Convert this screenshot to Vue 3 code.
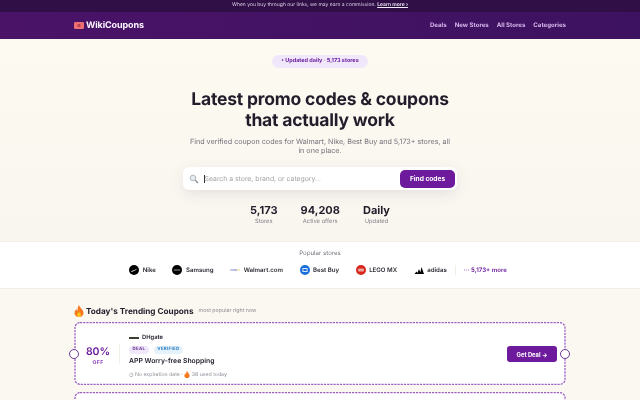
<script setup>
const stats = [
  { value: '5,173', label: 'Stores' },
  { value: '94,208', label: 'Active offers' },
  { value: 'Daily', label: 'Updated' },
]
const stores = [
  { name: 'Nike', type: 'nike' },
  { name: 'Samsung', type: 'samsung' },
  { name: 'Walmart.com', type: 'walmart' },
  { name: 'Best Buy', type: 'bestbuy' },
  { name: 'LEGO MX', type: 'lego' },
  { name: 'adidas', type: 'adidas' },
]
</script>

<template>
  <div class="page">
    <div class="notice">
      When you buy through our links, we may earn a commission. <a class="notice-link">Learn more ›</a>
    </div>
    <header class="nav">
      <div class="brand">
        <svg class="brand-icon" width="10" height="7" viewBox="0 0 10 7">
          <rect width="10" height="7" rx="1.2" fill="#ee6f73" />
          <rect x="3.6" y="2" width="2.8" height="3" fill="#b8434f" />
        </svg>
        <span>WikiCoupons</span>
      </div>
      <nav class="nav-links">
        <a>Deals</a>
        <a>New Stores</a>
        <a>All Stores</a>
        <a>Categories</a>
      </nav>
    </header>

    <section class="hero">
      <div class="pill">• Updated daily · 5,173 stores</div>
      <h1>Latest promo codes &amp; coupons<br>that actually work</h1>
      <p class="sub">Find verified coupon codes for Walmart, Nike, Best Buy and 5,173+ stores, all in one place.</p>
      <div class="search">
        <svg class="search-icon" width="10" height="10" viewBox="0 0 10 10">
          <circle cx="4" cy="4" r="2.8" fill="#e6ebf0" stroke="#aab2b9" stroke-width="0.900" />
          <path d="M6.2 6.2 9 9" stroke="#8a9096" stroke-width="1.300" />
        </svg>
        <span class="caret"></span>
        <span class="placeholder">Search a store, brand, or category...</span>
        <button class="find">Find codes</button>
      </div>
      <div class="stats">
        <div v-for="s in stats" :key="s.label" class="stat">
          <strong>{{ s.value }}</strong>
          <span>{{ s.label }}</span>
        </div>
      </div>
    </section>

    <section class="popular">
      <div class="popular-title">Popular stores</div>
      <div class="store-row">
        <div v-for="st in stores" :key="st.name" class="store">
          <svg width="10" height="10" viewBox="0 0 10 10">
            <template v-if="st.type === 'nike'">
              <circle cx="5" cy="5" r="5" fill="#000" />
              <path d="M2 6.2C3.5 6 6 5 8.2 3.8 6.500 5.500 3.500 7 2.600 6.800Z" fill="#fff" />
            </template>
            <template v-else-if="st.type === 'samsung'">
              <circle cx="5" cy="5" r="5" fill="#000" />
              <rect x="1.800" y="4.600" width="6.400" height="0.800" fill="#bbb" />
            </template>
            <template v-else-if="st.type === 'walmart'">
              <rect x="0" y="4.500" width="3" height="1" fill="#8c9be0" />
              <rect x="3" y="4.500" width="4" height="1" fill="#6a7bd0" />
              <rect x="7" y="4.500" width="3" height="1" fill="#e8d68a" />
            </template>
            <template v-else-if="st.type === 'bestbuy'">
              <circle cx="5" cy="5" r="5" fill="#1a6fdc" />
              <rect x="2.400" y="3" width="5.200" height="4" rx="0.600" fill="#d8e6f8" />
              <rect x="3.400" y="4" width="3.200" height="2" fill="#1a6fdc" />
            </template>
            <template v-else-if="st.type === 'lego'">
              <circle cx="5" cy="5" r="5" fill="#d9251c" />
              <rect x="2" y="3.500" width="6" height="3" rx="1" fill="#e8a8a0" />
            </template>
            <template v-else>
              <path d="M0.500 9 2.500 6.500 4 9ZM3 9 5 4 7 9ZM6 9 7.500 2 10 9Z" fill="#000" />
            </template>
          </svg>
          <span>{{ st.name }}</span>
        </div>
        <span class="divider"></span>
        <div class="more">··· 5,173+ more</div>
      </div>
    </section>

    <section class="trending">
      <div class="trend-head">
        <svg class="flame" width="10" height="12" viewBox="0 0 10 12">
          <path d="M5 0C5.500 2.500 9.500 4.500 9.500 8 9.500 10.500 7.500 12 5 12 2.500 12 .5 10.500 .5 8 .5 6 1.700 4.800 2.500 4 2.700 5 3 5.500 3.600 5.700 3.400 3.500 4 1.500 5 0Z" fill="#f4791f" />
          <path d="M5 6.500C5.500 7.800 7 8.500 7 10 7 11.200 6 12 5 12 4 12 3 11.200 3 10 3 8.800 4.500 8 5 6.500Z" fill="#fcc419" />
        </svg>
        <h2>Today's Trending Coupons</h2>
        <span class="trend-sub">most popular right now</span>
      </div>

      <article class="coupon">
        <svg class="dash" width="492" height="63" viewBox="0 0 492 63">
          <rect x="1" y="0.700" width="490" height="61.600" rx="5" fill="none" stroke="#9a5fc0" stroke-width="1.300" stroke-dasharray="2.200 1" />
        </svg>
        <span class="notch notch-left"></span>
        <span class="notch notch-right"></span>
        <div class="discount">
          <strong>80%</strong>
          <span>OFF</span>
        </div>
        <div class="info">
          <div class="merchant">
            <span class="merchant-logo"></span>
            <span>DHgate</span>
          </div>
          <div class="tags">
            <span class="tag tag-deal">DEAL</span>
            <span class="tag tag-verified">VERIFIED</span>
          </div>
          <div class="title">APP Worry-free Shopping</div>
          <div class="meta">
            <span>◷ No expiration date ·</span>
            <svg width="6" height="7" viewBox="0 0 10 12">
              <path d="M5 0C5.500 2.500 9.500 4.500 9.500 8 9.500 10.500 7.500 12 5 12 2.500 12 .5 10.500 .5 8 .5 6 1.700 4.800 2.500 4 2.700 5 3 5.500 3.600 5.700 3.400 3.500 4 1.500 5 0Z" fill="#f4791f" />
            </svg>
            <span>38 used today</span>
          </div>
        </div>
        <button class="deal">Get Deal →</button>
      </article>
      <article class="coupon coupon-next">
        <svg class="dash" width="492" height="63" viewBox="0 0 492 63">
          <rect x="1" y="0.700" width="490" height="61.600" rx="5" fill="none" stroke="#9a5fc0" stroke-width="1.300" stroke-dasharray="2.200 1" />
        </svg>
      </article>
    </section>
  </div>
</template>

<style scoped>
.page {
  width: 640px;
  height: 400px;
  overflow: hidden;
  font-family: Inter, "Liberation Sans", sans-serif;
  text-rendering: geometricPrecision;
  -webkit-font-smoothing: antialiased;
  will-change: transform;
  background: #fbf8f1;
  color: #231c2b;
}

.notice {
  height: 12px;
  line-height: 11px;
  background: #2f0f45;
  color: #dccfe6;
  font-size: 5px;
  text-align: center;
}

.notice-link {
  color: #f4ecfa;
  font-weight: 600;
  text-decoration: underline;
}

.nav {
  height: 27px;
  box-sizing: border-box;
  padding: 0 74px;
  display: flex;
  align-items: center;
  justify-content: space-between;
  background: linear-gradient(90deg, #4a1368, #3d1260);
}

.brand {
  display: flex;
  align-items: center;
  gap: 2px;
  color: #fbf6ff;
  font-size: 9px;
  font-weight: 700;
  letter-spacing: -0.1px;
}

.nav-links {
  display: flex;
  gap: 8px;
  color: #d4b6ea;
  font-size: 6.100px;
  font-weight: 700;
}

.hero {
  height: 202px;
  box-sizing: border-box;
  padding-top: 16px;
  display: flex;
  flex-direction: column;
  align-items: center;
  background: linear-gradient(180deg, #fdfaf1, #f9f6f0);
}

.pill {
  height: 13px;
  line-height: 13px;
  padding: 0 9px;
  border-radius: 7px;
  background: #f0e7fa;
  color: #6b1fa0;
  font-size: 5.500px;
  font-weight: 700;
}

h1 {
  margin: 22px 0 0;
  font-size: 17.500px;
  line-height: 20.500px;
  font-weight: 700;
  letter-spacing: -0.2px;
  text-align: center;
  color: #231c2b;
}

.sub {
  width: 265px;
  margin: 6px 0 0;
  font-size: 7.180px;
  line-height: 9.300px;
  text-align: center;
  color: #77717c;
}

.search {
  width: 274px;
  height: 23px;
  margin-top: 11.500px;
  box-sizing: border-box;
  padding: 0 2px 0 6px;
  display: flex;
  align-items: center;
  background: #fff;
  border-radius: 6px;
  box-shadow: 0 4px 14px rgba(60, 30, 80, 0.1);
}

.search-icon {
  flex: none;
}

.caret {
  width: 0.600px;
  height: 8px;
  margin-left: 5px;
  background: #333;
}

.placeholder {
  flex: 1;
  font-size: 6.850px;
  color: #a3a0a6;
}

.find {
  width: 55px;
  height: 18px;
  padding: 0;
  border: 0;
  border-radius: 5px;
  background: #6d1b9c;
  color: #fff;
  font-family: inherit;
  font-size: 6.600px;
  font-weight: 700;
}

.stats {
  display: flex;
  gap: 23px;
  margin-top: 13px;
}

.stat {
  display: flex;
  flex-direction: column;
  align-items: center;
}

.stat strong {
  font-size: 11px;
  line-height: 14px;
  font-weight: 700;
}

.stat span {
  margin-top: 1px;
  font-size: 5.800px;
  line-height: 8px;
  color: #85808a;
}

.popular {
  height: 48px;
  box-sizing: border-box;
  padding-top: 8px;
  background: #fff;
  border-top: 1px solid #f1eee8;
  border-bottom: 1px solid #f1eee8;
}

.popular-title {
  font-size: 6.100px;
  line-height: 8px;
  text-align: center;
  color: #77717c;
}

.store-row {
  margin-top: 7px;
  padding-right: 4px;
  display: flex;
  align-items: center;
  justify-content: center;
  gap: 16.600px;
}

.store {
  display: flex;
  align-items: center;
  gap: 3.500px;
  font-size: 6.100px;
  font-weight: 600;
  color: #2f2a33;
}

.divider {
  width: 1px;
  height: 10px;
  margin: 0 -8.600px;
  background: #f1eee8;
}

.more {
  font-size: 6.100px;
  font-weight: 600;
  color: #6d1b9c;
}

.trending {
  padding: 15px 74px 0;
}

.trend-head {
  display: flex;
  align-items: center;
  height: 14px;
}

.flame {
  margin-right: 2px;
}

h2 {
  margin: 0;
  font-size: 8.200px;
  font-weight: 700;
  color: #231c2b;
}

.trend-sub {
  margin-left: 5px;
  font-size: 5.300px;
  color: #8f8a93;
}

.coupon {
  position: relative;
  height: 63px;
  box-sizing: border-box;
  margin-top: 4px;
  padding: 0 9px 0 0;
  display: flex;
  align-items: center;
  background: #fff;
  border-radius: 6px;
}

.coupon-next {
  margin-top: 7px;
}

.dash {
  position: absolute;
  top: 0;
  left: 0;
}

.notch {
  position: absolute;
  top: 27px;
  width: 10px;
  height: 10px;
  box-sizing: border-box;
  border: 1.300px solid #6d3a96;
  border-radius: 50%;
  background: #fff;
}

.notch-left {
  left: -5px;
}

.notch-right {
  right: -4px;
}

.discount {
  width: 46px;
  height: 20px;
  box-sizing: border-box;
  padding: 4px 0 0 3px;
  display: flex;
  flex-direction: column;
  align-items: center;
  justify-content: center;
  border-right: 1px solid #f1eee8;
  color: #6d1b9c;
}

.discount strong {
  font-size: 10.500px;
  line-height: 13px;
  font-weight: 600;
}

.discount span {
  margin-top: 2px;
  font-size: 5px;
  font-weight: 700;
  letter-spacing: 0.5px;
  color: #8a3bb8;
}

.info {
  flex: 1;
  padding: 5px 0 0 9px;
  display: flex;
  flex-direction: column;
}

.merchant {
  display: flex;
  align-items: center;
  gap: 3px;
  font-size: 5.800px;
  font-weight: 600;
}

.merchant-logo {
  width: 10px;
  height: 2px;
  background: #3a3f2f;
}

.tags {
  margin-top: 5px;
  display: flex;
  gap: 5px;
}

.tag {
  height: 8px;
  line-height: 8px;
  padding: 0 3.500px;
  border-radius: 4px;
  font-size: 4.400px;
  font-weight: 700;
  letter-spacing: 0.3px;
}

.tag-deal {
  background: #f0e7fa;
  color: #6d3a96;
}

.tag-verified {
  background: #e6f2fb;
  color: #2b7fc2;
}

.title {
  margin-top: 2px;
  font-size: 6.850px;
  font-weight: 600;
  color: #231c2b;
}

.meta {
  margin-top: 6px;
  display: flex;
  align-items: center;
  gap: 1.500px;
  font-size: 5.200px;
  color: #8f8a93;
}

.deal {
  position: relative;
  top: 0.500px;
  width: 50px;
  height: 16px;
  padding: 0;
  border: 0;
  border-radius: 3px;
  background: #6d1b9c;
  color: #fff;
  font-family: inherit;
  font-size: 5.800px;
  font-weight: 700;
}
</style>
